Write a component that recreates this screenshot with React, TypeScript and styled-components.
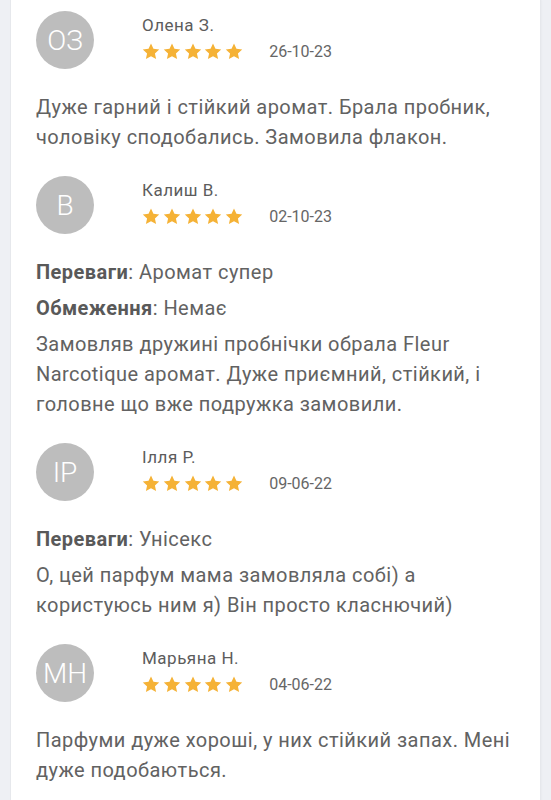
import React from "react";
import styled, { createGlobalStyle } from "styled-components";

const Global = createGlobalStyle`
  html, body { margin: 0; padding: 0; background: #eef0f4; }
  body { font-family: Roboto, "Noto Sans", "Liberation Sans", sans-serif; }
`;

const Card = styled.div`
  margin: 0 11px 0 11px;
  background: #fff;
  box-shadow: 0 0 0 1px #e6e8ec, 1px 0 2px rgba(0,0,0,0.06);
  padding: 11px 20px 40px 25px;
  display: flex;
  flex-direction: column;
  gap: 24px;
  min-height: 800px;
  box-sizing: border-box;
`;

const Review = styled.div`
  display: flex;
  flex-direction: column;
`;

const Head = styled.div`
  display: flex;
  align-items: flex-start;
  gap: 48px;
  margin-bottom: 23px;
`;

const Avatar = styled.div`
  width: 58px;
  height: 58px;
  border-radius: 50%;
  background: #bdbdbd;
  color: #fff;
  font-size: 28px;
  font-weight: 300;
  display: flex;
  align-items: center;
  justify-content: center;
  flex-shrink: 0;
`;

const Meta = styled.div`
  display: flex;
  flex-direction: column;
  padding-top: 3px;
`;

const Name = styled.div`
  font-size: 17px;
  letter-spacing: 0.5px;
  line-height: 22px;
  color: #5c5c5c;
`;

const RatingRow = styled.div`
  display: flex;
  align-items: center;
  gap: 26px;
  margin-top: 3px;
`;

const Stars = styled.div`
  display: flex;
  gap: 2.8px;
`;

const DateText = styled.span`
  font-size: 16px;
  color: #666;
  line-height: 22px;
  padding-top: 2px;
`;

const Para = styled.p`
  margin: 0;
  font-size: 20px;
  letter-spacing: 0.45px;
  line-height: 30px;
  color: #626262;
  & + & { margin-top: 6px; }
`;

const Label = styled.b`
  font-weight: 700;
  color: #595959;
`;

const Star = () => (
  <svg width="18" height="17" viewBox="0 0 24 23">
    <path
      d="M12 0.8l3.3 7.1 7.8.9-5.8 5.3 1.6 7.7L12 17.9l-6.9 3.9 1.6-7.7L.9 8.8l7.8-.9z"
      fill="#f5b236"
    />
  </svg>
);

type R = {
  initials: string;
  name: string;
  date: string;
  plus?: string;
  minus?: string;
  lines: string[];
};

const reviews: R[] = [
  {
    initials: "ОЗ",
    name: "Олена З.",
    date: "26-10-23",
    lines: ["Дуже гарний і стійкий аромат. Брала пробник,", "чоловіку сподобались. Замовила флакон."],
  },
  {
    initials: "В",
    name: "Калиш В.",
    date: "02-10-23",
    plus: "Аромат супер",
    minus: "Немає",
    lines: [
      "Замовляв дружині пробнічки обрала Fleur",
      "Narcotique аромат. Дуже приємний, стійкий, і",
      "головне що вже подружка замовили.",
    ],
  },
  {
    initials: "IP",
    name: "Ілля Р.",
    date: "09-06-22",
    plus: "Унісекс",
    lines: ["О, цей парфум мама замовляла собі) а", "користуюсь ним я) Він просто класнючий)"],
  },
  {
    initials: "МН",
    name: "Марьяна Н.",
    date: "04-06-22",
    lines: ["Парфуми дуже хороші, у них стійкий запах. Мені", "дуже подобаються."],
  },
];

export default function App() {
  return (
    <>
      <Global />
      <Card>
        {reviews.map((r) => (
          <Review key={r.name}>
            <Head>
              <Avatar>{r.initials}</Avatar>
              <Meta>
                <Name>{r.name}</Name>
                <RatingRow>
                  <Stars>
                    {[0, 1, 2, 3, 4].map((i) => (
                      <Star key={i} />
                    ))}
                  </Stars>
                  <DateText>{r.date}</DateText>
                </RatingRow>
              </Meta>
            </Head>
            {r.plus && (
              <Para>
                <Label>Переваги</Label>: {r.plus}
              </Para>
            )}
            {r.minus && (
              <Para>
                <Label>Обмеження</Label>: {r.minus}
              </Para>
            )}
            <Para>
              {r.lines.map((l, i) => (
                <React.Fragment key={i}>
                  {i > 0 && <br />}
                  {l}
                </React.Fragment>
              ))}
            </Para>
          </Review>
        ))}
      </Card>
    </>
  );
}
